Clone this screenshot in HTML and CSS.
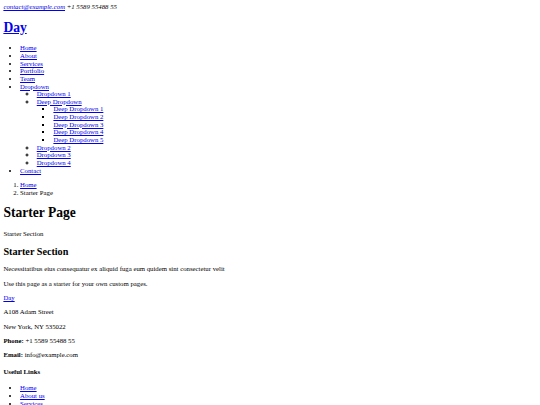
FILE: index.html
```html
<!DOCTYPE html>
<html lang="en">
<head>
<meta charset="utf-8">
<title>Starter Page - Day</title>
<link rel="stylesheet" href="styles.css">
</head>
<body>
<header class="header">
  <div class="topbar"><i class="contact-item"><a href="#">contact@example.com</a></i> <i class="contact-item"><span>+1 5589 55488 55</span></i></div>
  <h1 class="sitename"><a href="#">Day</a></h1>
  <nav class="navmenu">
    <ul class="list">
      <li><a href="#">Home</a></li>
      <li><a href="#">About</a></li>
      <li><a href="#">Services</a></li>
      <li><a href="#">Portfolio</a></li>
      <li><a href="#">Team</a></li>
      <li><a href="#">Dropdown</a>
        <ul class="list sub">
          <li><a href="#">Dropdown 1</a></li>
          <li><a href="#">Deep Dropdown</a>
            <ul class="list sub">
              <li><a href="#">Deep Dropdown 1</a></li>
              <li><a href="#">Deep Dropdown 2</a></li>
              <li><a href="#">Deep Dropdown 3</a></li>
              <li><a href="#">Deep Dropdown 4</a></li>
              <li><a href="#">Deep Dropdown 5</a></li>
            </ul>
          </li>
          <li><a href="#">Dropdown 2</a></li>
          <li><a href="#">Dropdown 3</a></li>
          <li><a href="#">Dropdown 4</a></li>
        </ul>
      </li>
      <li><a href="#">Contact</a></li>
    </ul>
  </nav>
</header>
<main class="main">
  <ol class="list breadcrumbs">
    <li><a href="#">Home</a></li>
    <li>Starter Page</li>
  </ol>
  <h1 class="title">Starter Page</h1>
  <p class="para">Starter Section</p>
  <h2 class="section-title">Starter Section</h2>
  <p class="para">Necessitatibus eius consequatur ex aliquid fuga eum quidem sint consectetur velit</p>
  <p class="para">Use this page as a starter for your own custom pages.</p>
</main>
<footer class="footer">
  <a href="#" class="logo">Day</a>
  <div class="footer-contact">
    <p class="para">A108 Adam Street</p>
    <p class="para">New York, NY 535022</p>
    <p class="para"><strong>Phone:</strong> <span>+1 5589 55488 55</span></p>
    <p class="para"><strong>Email:</strong> <span>info@example.com</span></p>
  </div>
  <h4 class="footer-title">Useful Links</h4>
  <ul class="list">
    <li><a href="#">Home</a></li>
    <li><a href="#">About us</a></li>
    <li><a href="#">Services</a></li>
    <li><a href="#">Terms of service</a></li>
    <li><a href="#">Privacy policy</a></li>
  </ul>
</footer>
</body>
</html>
```
FILE: styles.css
```css
html {
  font-family: "Liberation Serif", "Times New Roman", serif;
  font-size: 6.78px;
  line-height: 1.13;
  color: #000;
}
body {
  margin: 0.5em;
}
a {
  color: #0000ee;
}
.topbar {
  display: block;
}
.sitename,
.title {
  font-size: 2em;
  margin: 0.66em 0;
}
.section-title {
  font-size: 1.5em;
  margin: 0.82em 0;
}
.footer-title {
  font-size: 1em;
  margin: 1.31em 0;
}
.para {
  margin: 0.985em 0;
}
.list {
  margin: 0.985em 0;
  padding-left: 2.46em;
}
.list.sub {
  margin: 0;
}
```
